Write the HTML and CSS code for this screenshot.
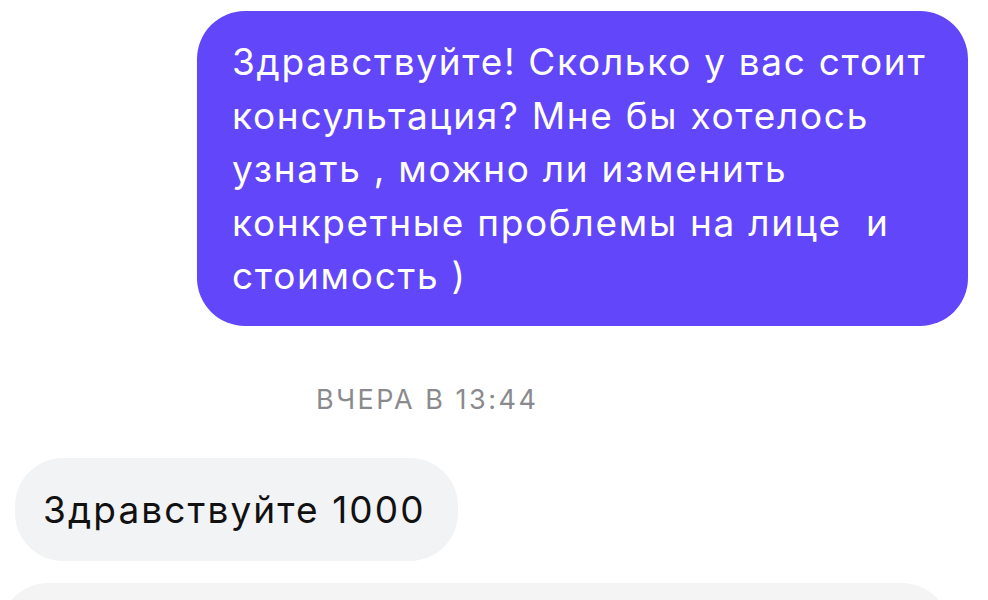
FILE: index.html
```html
<!DOCTYPE html>
<html lang="ru">
<head>
  <meta charset="UTF-8" />
  <meta name="viewport" content="width=device-width, initial-scale=1.0"/>
  <title>Чат</title>
  <link rel="stylesheet" href="styles.css">
</head>
<body>
  <div class="chat">
    <div class="msg msg-out">Здравствуйте! Сколько у вас стоит<br>консультация? Мне бы хотелось<br>узнать , можно ли изменить<br>конкретные проблемы на лице&nbsp; и<br>стоимость )</div>

    <div class="time">ВЧЕРА В 13:44</div>

    <div class="msg msg-in">Здравствуйте 1000</div>
    <div class="msg msg-in msg-wide">&nbsp;</div>
  </div>
</body>
</html>
```

FILE: styles.css
```css
body {
  margin: 0;
  background: #fff;
  font-family: Inter, "Noto Sans", sans-serif;
  overflow: hidden;
}
.chat {
  display: flex;
  flex-direction: column;
  padding-top: 11px;
}
.msg {
  font-size: 37px;
  line-height: 53.5px;
  letter-spacing: 1.7px;
  border-radius: 48px;
  white-space: nowrap;
}
.msg-out {
  align-self: flex-end;
  width: 700px;
  margin-right: 20px;
  padding: 24px 36px 23px 35px;
  background: #6246f9;
  color: #fff;
}
.time {
  margin: 58px 0 42px 316px;
  font-size: 27px;
  line-height: 32px;
  letter-spacing: 2.5px;
  color: #8a8a8e;
}
.msg-in {
  align-self: flex-start;
  margin-left: 15px;
  padding: 25px 32px 25px 28px;
  letter-spacing: 2.1px;
  background: #f2f3f5;
  color: #111;
}
.msg-wide {
  margin: 22px 0 0 0;
  width: 890px;
  background: #f4f4f5;
}
```
